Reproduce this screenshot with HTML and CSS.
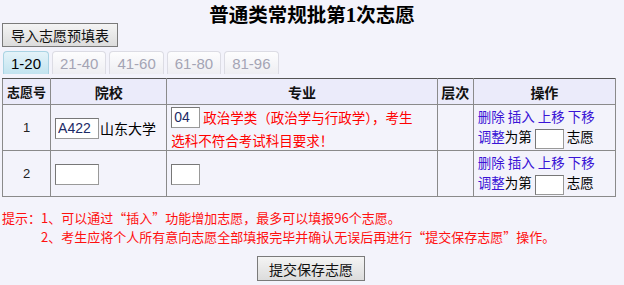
FILE: index.html
```html
<!DOCTYPE html>
<html lang="zh-CN">
<head>
<meta charset="utf-8">
<title>普通类常规批第1次志愿</title>
<link rel="stylesheet" href="styles.css">
</head>
<body>
<div class="title">普通类常规批第<b class="num">1</b>次志愿</div>
<div class="toolbar"><button class="btn btn-import">导入志愿预填表</button></div>
<div class="tabs">
  <span class="tab active">1-20</span>
  <span class="tab">21-40</span>
  <span class="tab">41-60</span>
  <span class="tab">61-80</span>
  <span class="tab">81-96</span>
</div>
<table class="grid">
  <colgroup>
    <col class="c-no"><col class="c-school"><col class="c-major"><col class="c-level"><col class="c-op">
  </colgroup>
  <thead>
    <tr><th>志愿号</th><th>院校</th><th>专业</th><th>层次</th><th>操作</th></tr>
  </thead>
  <tbody>
    <tr class="row">
      <td class="center">1</td>
      <td><input class="inp inp-school" value="A422"><span class="school-name">山东大学</span></td>
      <td class="major"><input class="inp inp-major" value="04"> <span class="warn">政治学类（政治学与行政学），考生<br>选科不符合考试科目要求！</span></td>
      <td></td>
      <td class="ops">
        <div><a class="lnk">删除</a> <a class="lnk">插入</a> <a class="lnk">上移</a> <a class="lnk">下移</a></div>
        <div><a class="lnk">调整</a>为第 <input class="inp inp-pos"> 志愿</div>
      </td>
    </tr>
    <tr class="row">
      <td class="center">2</td>
      <td><input class="inp inp-school" value=""></td>
      <td class="major"><input class="inp inp-major" value=""></td>
      <td></td>
      <td class="ops">
        <div><a class="lnk">删除</a> <a class="lnk">插入</a> <a class="lnk">上移</a> <a class="lnk">下移</a></div>
        <div><a class="lnk">调整</a>为第 <input class="inp inp-pos"> 志愿</div>
      </td>
    </tr>
  </tbody>
</table>
<div class="tips">
  <div>提示：1、可以通过“插入”功能增加志愿，最多可以填报96个志愿。</div>
  <div class="indent">2、考生应将个人所有意向志愿全部填报完毕并确认无误后再进行“提交保存志愿”操作。</div>
</div>
<div class="submit-row"><button class="btn btn-submit">提交保存志愿</button></div>
</body>
</html>
```
FILE: styles.css
```css
html, body {
  margin: 0;
  padding: 0;
  background: #f3f3fb;
}
body {
  font-family: "Noto Sans CJK SC", "Liberation Sans", sans-serif;
  font-size: 13px;
  color: #000;
  width: 624px;
  height: 285px;
  overflow: hidden;
}
.title {
  text-align: center;
  font-family: "Noto Sans CJK SC", serif;
  font-weight: bold;
  font-size: 19.5px;
  line-height: 28px;
  margin: 0 0 -6px 0;
}
.title .num {
  font-family: "Liberation Serif", serif;
  font-size: 21px;
}
.toolbar {
  padding-left: 2px;
  height: 24px;
}
.btn {
  font-family: "Noto Sans CJK SC", sans-serif;
  font-size: 14px;
  color: #111;
  background: linear-gradient(#f4f4f4, #dcdcdc);
  border: 1px solid #7a7a7a;
  border-radius: 0;
  padding: 0;
  margin: 0;
  height: 24px;
  line-height: 20px;
}
.btn-import {
  width: 116px;
}
.tabs {
  display: flex;
  gap: 3px;
  padding-left: 3px;
  margin-top: 4px;
  height: 24px;
}
.tab {
  height: 22px;
  line-height: 23px;
  padding: 0 7px;
  font-family: "Liberation Sans", sans-serif;
  font-size: 15px;
  color: #a4a4b4;
  background: linear-gradient(#fdfdfe, #eeeef2);
  border: 1px solid #dcdce4;
  border-bottom: none;
  border-radius: 4px 4px 0 0;
}
.tab.active {
  color: #000;
  background: linear-gradient(#e4f3f9, #c2e3ef);
  border-color: #a9d3e3;
}
.grid {
  margin-top: 3px;
  margin-left: 2px;
  width: 614px;
  border-collapse: collapse;
  border: 1px solid #555;
  table-layout: fixed;
}
.c-no { width: 48px; }
.c-school { width: 116px; }
.c-major { width: 270px; }
.c-level { width: 36px; }
.c-op { width: 142px; }
.grid th, .grid td {
  border: 1px solid #8a8a8a;
  padding: 0;
}
.grid th {
  height: 25px;
  background: #ebebfa;
  font-size: 14px;
  font-weight: bold;
  color: #111;
  text-align: center;
  border-top-color: #555;
}
.grid th:first-child {
  font-size: 13px;
}
.grid td {
  vertical-align: middle;
}
.row td {
  height: 45px;
}
.center {
  text-align: center;
  font-family: "Liberation Sans", sans-serif;
  font-size: 13px;
  color: #222;
}
.inp {
  box-sizing: border-box;
  height: 21px;
  border: 1px solid #999;
  border-top-color: #777;
  border-left-color: #777;
  background: #fff;
  font-family: "Liberation Sans", sans-serif;
  font-size: 14px;
  color: #1c2a66;
  padding: 0 2px;
  margin: 0;
  vertical-align: middle;
}
.inp-school {
  width: 44px;
  margin-left: 4px;
}
.school-name {
  vertical-align: middle;
  font-size: 14px;
  margin-left: 1px;
}
.major {
  padding: 0 4px !important;
  line-height: 20px;
  font-size: 13.5px;
}
.inp-major {
  width: 29px;
}
.warn {
  color: #ff0000;
  vertical-align: middle;
}
.ops {
  padding-left: 4px !important;
  line-height: 20px;
  font-size: 13.5px;
}
.lnk {
  color: #3a14d6;
  cursor: pointer;
}
.inp-pos {
  width: 29px;
  height: 20px;
}
.tips {
  margin-top: 11px;
  padding-left: 2px;
  color: #ff1010;
  font-size: 13px;
  line-height: 19px;
}
.tips .indent {
  padding-left: 39px;
}
.submit-row {
  margin-top: 10px;
  text-align: center;
  padding-right: 2px;
}
.btn-submit {
  width: 108px;
  height: 25px;
}
```
